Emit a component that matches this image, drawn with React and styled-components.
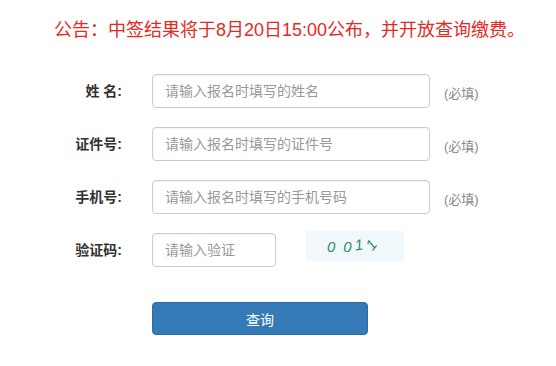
import styled, { createGlobalStyle } from 'styled-components';

const GlobalStyle = createGlobalStyle`
  html, body {
    margin: 0;
    padding: 0;
    background: #ffffff;
  }
  body {
    font-family: "Liberation Sans", "Noto Sans CJK SC", sans-serif;
    color: #333333;
  }
`;

const Page = styled.div`
  width: 556px;
  height: 366px;
  overflow: hidden;
  background: #ffffff;
`;

const Notice = styled.div`
  padding: 18px 0 0 54px;
  height: 24px;
  font-size: 18px;
  line-height: 24px;
  color: #e42a25;
  white-space: nowrap;
`;

const Form = styled.form`
  margin-top: 32px;
  display: flex;
  flex-direction: column;
  gap: 19px;
`;

const Row = styled.div`
  display: flex;
  align-items: ${(p) => p.$align || 'center'};
  height: 34px;
`;

const Label = styled.label`
  width: 122px;
  flex-shrink: 0;
  margin-right: 30px;
  text-align: right;
  font-size: 14px;
  font-weight: bold;
  color: #333333;
  line-height: 34px;
  white-space: pre;
`;

const Input = styled.input`
  box-sizing: border-box;
  width: ${(p) => p.$width}px;
  height: 34px;
  padding: 0 12px;
  border: 1px solid #cccccc;
  border-radius: 4px;
  font-family: inherit;
  font-size: 14px;
  color: #555555;
  outline: none;
  box-shadow: inset 0 1px 1px rgba(0, 0, 0, 0.04);

  &::placeholder {
    color: #999999;
  }
`;

const Required = styled.span`
  margin-left: 14px;
  font-size: 13px;
  color: #888888;
  padding-top: 2px;
`;

const Captcha = styled.div`
  width: 98px;
  height: 30px;
  margin: -2px 0 0 30px;
  background: #f1f8fb;
  display: flex;
  align-items: center;
  padding-left: 21px;
  box-sizing: border-box;
  font-family: "Liberation Sans", sans-serif;
  font-style: italic;
  font-size: 15px;
  color: #2f8a72;
`;

const CaptchaChar = styled.span`
  display: inline-block;
  margin-right: ${(p) => p.$space || 0}px;
  transform: rotate(${(p) => p.$rotate || 0}deg) translateY(${(p) => p.$lift || 0}px);
`;

const ButtonRow = styled.div`
  margin-top: 35px;
  padding-left: 152px;
`;

const SubmitButton = styled.button`
  width: 216px;
  height: 33px;
  border: 1px solid #2e6da4;
  border-radius: 4px;
  background: #337ab7;
  color: #ffffff;
  font-family: inherit;
  font-size: 14px;
  cursor: pointer;
`;

const fields = [
  { label: '姓 名:', placeholder: '请输入报名时填写的姓名' },
  { label: '证件号:', placeholder: '请输入报名时填写的证件号' },
  { label: '手机号:', placeholder: '请输入报名时填写的手机号码' },
];

export default function App() {
  return (
    <Page>
      <GlobalStyle />
      <Notice>公告：中签结果将于8月20日15:00公布，并开放查询缴费。</Notice>
      <Form onSubmit={(e) => e.preventDefault()}>
        {fields.map((f) => (
          <Row key={f.label}>
            <Label>{f.label}</Label>
            <Input $width={278} placeholder={f.placeholder} />
            <Required>(必填)</Required>
          </Row>
        ))}
        <Row $align="start">
          <Label>验证码:</Label>
          <Input $width={124} placeholder="请输入验证" />
          <Captcha>
            <CaptchaChar $space={8}>0</CaptchaChar>
            <CaptchaChar $space={3}>0</CaptchaChar>
            <CaptchaChar $space={6} $rotate={-8} $lift={-2}>1</CaptchaChar>
            <CaptchaChar $rotate={-50} $lift={-3}>1</CaptchaChar>
          </Captcha>
        </Row>
      </Form>
      <ButtonRow>
        <SubmitButton type="button">查询</SubmitButton>
      </ButtonRow>
    </Page>
  );
}
